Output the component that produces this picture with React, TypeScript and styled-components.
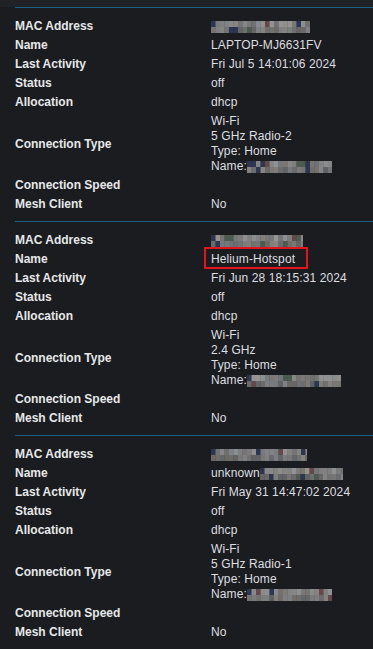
import React from 'react';
import styled, { createGlobalStyle } from 'styled-components';

const colors = {
  page: '#1b1c1f',
  pageTop: '#212225',
  divider: '#1d5f86',
  label: '#e6e8ea',
  value: '#dedfe1',
  highlight: '#e3141c',
};

const GlobalStyle = createGlobalStyle`
  html, body {
    margin: 0;
    padding: 0;
    background: ${colors.page};
  }

  body {
    font-family: 'Liberation Sans', Arial, sans-serif;
    font-size: 12px;
    color: ${colors.value};
  }
`;

const Page = styled.div`
  min-height: 649px;
  background: ${colors.page};
`;

const TopEdge = styled.div`
  height: 7px;
  background: ${colors.pageTop};
`;

const DeviceList = styled.div`
  padding-left: 15px;
`;

const DeviceBlock = styled.section`
  border-top: 1px solid ${colors.divider};
  padding: 8px 0;
`;

const InfoTable = styled.table`
  width: 100%;
  border-collapse: collapse;
  border-spacing: 0;
`;

const Label = styled.th`
  width: 196px;
  padding: 3px 0 1px;
  text-align: left;
  vertical-align: middle;
  font-weight: bold;
  line-height: 15px;
  color: ${colors.label};
  white-space: nowrap;
`;

const Value = styled.td`
  padding: 3px 0 1px;
  line-height: 15px;
  vertical-align: middle;
  color: ${colors.value};
  white-space: nowrap;
  letter-spacing: 0.1px;
`;

const Highlight = styled.span`
  position: relative;

  &::after {
    content: '';
    position: absolute;
    top: -5px;
    bottom: -3px;
    left: -7px;
    right: -13px;
    border: 2px solid ${colors.highlight};
    pointer-events: none;
  }
`;

const MosaicSvg = styled.svg`
  display: inline-block;
  vertical-align: -3px;
`;

// pixelated placeholder for redacted values
function rng(seed: number) {
  let s = seed;
  return () => {
    s = (s * 16807) % 2147483647;
    return (s - 1) / 2147483646;
  };
}

const Mosaic: React.FC<{ width: number; seed: number }> = ({ width, seed }) => {
  const rand = rng(seed);
  const cell = 4.5;
  const cols = Math.ceil(width / cell);
  const rects: React.ReactNode[] = [];
  for (let r = 0; r < 2; r++) {
    for (let c = 0; c < cols; c++) {
      const p = rand();
      let fill: string;
      if (p < 0.06) fill = '#2c3650';
      else if (p < 0.1) fill = '#64494b';
      else if (p < 0.15) fill = '#4d5a50';
      else {
        const g = Math.round((r === 0 ? 112 : 96) + rand() * 36);
        const t = Math.round(rand() * 8 - 4);
        fill = `rgb(${g + t},${g},${g - t})`;
      }
      rects.push(<rect key={`${r}-${c}`} x={c * cell} y={r * 6} width={cell + 0.3} height={6} fill={fill} />);
    }
  }
  return (
    <MosaicSvg width={width} height={12} viewBox={`0 0 ${width} 12`} aria-hidden>
      {rects}
    </MosaicSvg>
  );
};

type Device = {
  mac: { width: number; seed: number };
  name: React.ReactNode;
  lastActivity: string;
  band: string;
  ssid: { width: number; seed: number };
};

const devices: Device[] = [
  {
    mac: { width: 99, seed: 11 },
    name: 'LAPTOP-MJ6631FV',
    lastActivity: 'Fri Jul 5 14:01:06 2024',
    band: '5 GHz Radio-2',
    ssid: { width: 85, seed: 23 },
  },
  {
    mac: { width: 92, seed: 37 },
    name: <Highlight>Helium-Hotspot</Highlight>,
    lastActivity: 'Fri Jun 28 18:15:31 2024',
    band: '2.4 GHz',
    ssid: { width: 94, seed: 41 },
  },
  {
    mac: { width: 96, seed: 53 },
    name: (
      <>
        unknown
        <Mosaic width={83} seed={67} />
      </>
    ),
    lastActivity: 'Fri May 31 14:47:02 2024',
    band: '5 GHz Radio-1',
    ssid: { width: 85, seed: 79 },
  },
];

const DeviceInfo: React.FC<{ device: Device }> = ({ device }) => (
  <DeviceBlock>
    <InfoTable>
      <tbody>
        <tr>
          <Label>MAC Address</Label>
          <Value>
            <Mosaic width={device.mac.width} seed={device.mac.seed} />
          </Value>
        </tr>
        <tr>
          <Label>Name</Label>
          <Value>{device.name}</Value>
        </tr>
        <tr>
          <Label>Last Activity</Label>
          <Value>{device.lastActivity}</Value>
        </tr>
        <tr>
          <Label>Status</Label>
          <Value>off</Value>
        </tr>
        <tr>
          <Label>Allocation</Label>
          <Value>dhcp</Value>
        </tr>
        <tr>
          <Label>Connection Type</Label>
          <Value>
            Wi-Fi
            <br />
            {device.band}
            <br />
            Type: Home
            <br />
            Name:
            <Mosaic width={device.ssid.width} seed={device.ssid.seed} />
          </Value>
        </tr>
        <tr>
          <Label>Connection Speed</Label>
          <Value />
        </tr>
        <tr>
          <Label>Mesh Client</Label>
          <Value>No</Value>
        </tr>
      </tbody>
    </InfoTable>
  </DeviceBlock>
);

export default function App() {
  return (
    <Page>
      <GlobalStyle />
      <TopEdge />
      <DeviceList>
        {devices.map((d, i) => (
          <DeviceInfo key={i} device={d} />
        ))}
      </DeviceList>
    </Page>
  );
}
